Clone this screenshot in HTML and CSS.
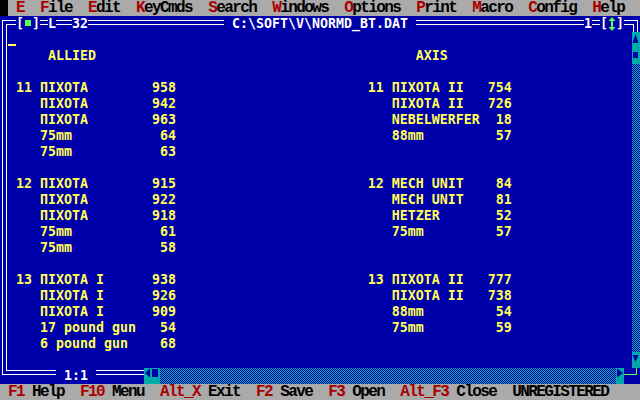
FILE: index.html
```html
<!DOCTYPE html>
<html lang="en">
<head>
<meta charset="utf-8">
<title>C:\SOFT\V\NORMD_BT.DAT</title>
<link rel="stylesheet" href="styles.css">
</head>
<body>
<div class="screen">
  <div class="row menubar">
    <span class="sel"></span>
    <span class="bartext"> <span class="hk macron">E</span>  <span class="hk">F</span>ile  <span class="hk">E</span>dit  <span class="hk">K</span>eyCmds  <span class="hk">S</span>earch  <span class="hk">W</span>indows  <span class="hk">O</span>ptions  <span class="hk">P</span>rint  <span class="hk">M</span>acro  <span class="hk">C</span>onfig  <span class="hk">H</span>elp</span>
  </div>

  <div class="window">
    <div class="row titlebar">
      <i class="corner-tl"></i><i class="dbl"></i><span class="t">[</span><span class="cell"><i class="close-box"></i></span><span class="t">]</span><i class="dbl"></i><span class="t">L</span><i class="dbl"></i><i class="dbl"></i><span class="t">32</span><i class="dbl fill-l"></i><span class="t"> C:\SOFT\V\NORMD_BT.DAT </span><i class="dbl fill-r"></i><span class="t">1</span><i class="dbl"></i><span class="t">[</span><span class="cell"><svg class="zoom-icon" viewBox="0 0 8 16" width="8" height="16"><path d="M4 1 L7.5 5 L5 5 L5 11 L7.5 11 L4 15 L0.5 11 L3 11 L3 5 L0.5 5 Z"/></svg></span><span class="t">]</span><i class="dbl"></i><i class="corner-tr"></i>
    </div>

    <div class="client">
      <div class="frame-left"></div>
<pre class="text"><span class="cursor"></span>
     ALLIED                                        AXIS

 11 ПІХОТА        958                        11 ПІХОТА II   754
    ПІХОТА        942                           ПІХОТА II   726
    ПІХОТА        963                           NEBELWERFER  18
    75mm           64                           88mm         57
    75mm           63

 12 ПІХОТА        915                        12 MECH UNIT    84
    ПІХОТА        922                           MECH UNIT    81
    ПІХОТА        918                           HETZER       52
    75mm           61                           75mm         57
    75mm           58

 13 ПІХОТА I      938                        13 ПІХОТА II   777
    ПІХОТА I      926                           ПІХОТА II   738
    ПІХОТА I      909                           88mm         54
    17 pound gun   54                           75mm         59
    6 pound gun    68
</pre>
      <div class="vscroll">
        <div class="sb-btn"><svg viewBox="0 0 8 16" width="8" height="16"><polygon points="3.5,2 6.5,11 0.5,11"/></svg></div>
        <div class="sb-btn"><svg viewBox="0 0 8 16" width="8" height="16"><rect x="1" y="4" width="5" height="6"/></svg></div>
        <div class="track"></div>
        <div class="sb-btn"><svg viewBox="0 0 8 16" width="8" height="16"><polygon points="0.5,3 6.5,3 3.5,10"/></svg></div>
      </div>
    </div>

    <div class="row bottombar">
      <i class="corner-bl"></i><i class="dbl-b six"></i><span class="t"> 1:1 </span><i class="dbl-b six"></i>
      <div class="sb-btn"><svg viewBox="0 0 8 16" width="8" height="16"><polygon points="1,5 6,0.5 6,9.5"/></svg></div>
      <div class="sb-btn"><svg viewBox="0 0 8 16" width="8" height="16"><rect x="0" y="1" width="6" height="8"/></svg></div>
      <div class="track"></div>
      <div class="sb-btn"><svg viewBox="0 0 8 16" width="8" height="16"><polygon points="1,0.5 7,5 1,9.5"/></svg></div>
      <i class="resize-grip"></i>
    </div>
  </div>

  <div class="row statusbar">
    <span class="bartext"> <span class="hk">F1</span> Help  <span class="hk">F10</span> Menu  <span class="hk">Alt_X</span> Exit  <span class="hk">F2</span> Save  <span class="hk">F3</span> Open  <span class="hk">Alt_F3</span> Close  UNREGISTERED</span>
  </div>
</div>
</body>
</html>
```

FILE: styles.css
```css
* {
  box-sizing: border-box;
  margin: 0;
  padding: 0;
}

html,
body {
  width: 640px;
  height: 400px;
  overflow: hidden;
  background: #000;
}

/* 80 x 25 text screen, 8 x 16 character cells */
.screen {
  width: 640px;
  height: 400px;
  display: flex;
  flex-direction: column;
  font-family: "DejaVu Sans Mono", monospace;
  font-size: 13.29px;
  font-weight: bold;
  line-height: 16px;
}

.row {
  height: 16px;
  display: flex;
  flex: none;
  white-space: pre;
}

i {
  display: block;
  flex: none;
}

/* ---------- menu and status bars ---------- */
.menubar,
.statusbar {
  background: #aaaaaa;
  color: #000;
  font-family: "Liberation Mono", monospace;
  font-size: 16px;
  letter-spacing: -1.6px;
  line-height: 15px;
  padding-top: 1px;
}

.bartext {
  display: block;
}

.hk {
  color: #aa0000;
}

/* system menu letter: E with a bar above */
.macron {
  display: inline-block;
  width: 8px;
  height: 15px;
  vertical-align: top;
  background: linear-gradient(#aa0000, #aa0000) 1px 0 / 6px 1px no-repeat;
}

.sel {
  width: 8px;
  height: 16px;
  margin-top: -1px;
  background: #000;
}

/* ---------- editor window ---------- */
.window {
  height: 368px;
  display: flex;
  flex-direction: column;
  background: #0000aa;
  color: #ffffff;
}

.t {
  color: #ffffff;
}

.cell {
  width: 8px;
  height: 16px;
  flex: none;
  display: block;
}

.close-box {
  width: 6px;
  height: 6px;
  margin: 4px 0 0 1px;
  background: #55ff55;
}

.zoom-icon {
  display: block;
  fill: #55ff55;
}

/* double frame line on the title row */
.dbl {
  width: 8px;
  height: 16px;
  background:
    linear-gradient(#fff, #fff) 0 4px / 100% 1px no-repeat,
    linear-gradient(#fff, #fff) 0 8px / 100% 1px no-repeat;
}

.fill-l {
  flex: 17 1 0;
}

.fill-r {
  flex: 21 1 0;
}

.corner-tl {
  width: 8px;
  height: 16px;
  background:
    linear-gradient(#fff, #fff) 2px 4px / 6px 1px no-repeat,
    linear-gradient(#fff, #fff) 2px 4px / 1px 12px no-repeat,
    linear-gradient(#fff, #fff) 6px 8px / 2px 1px no-repeat,
    linear-gradient(#fff, #fff) 6px 8px / 1px 8px no-repeat;
}

.corner-tr {
  width: 8px;
  height: 16px;
  background:
    linear-gradient(#fff, #fff) 0 4px / 6px 1px no-repeat,
    linear-gradient(#fff, #fff) 5px 4px / 1px 12px no-repeat,
    linear-gradient(#fff, #fff) 0 8px / 2px 1px no-repeat,
    linear-gradient(#fff, #fff) 1px 8px / 1px 8px no-repeat;
}

/* client area: left frame, text, vertical scroll bar */
.client {
  height: 336px;
  display: flex;
}

.frame-left {
  width: 8px;
  flex: none;
  background:
    linear-gradient(#fff, #fff) 2px 0 / 1px 100% no-repeat,
    linear-gradient(#fff, #fff) 6px 0 / 1px 100% no-repeat;
}

.text {
  flex: 1;
  font: inherit;
  line-height: 16px;
  color: #ffff55;
  white-space: pre;
  overflow: hidden;
}

.cursor {
  display: inline-block;
  width: 8px;
  height: 16px;
  vertical-align: top;
  background: linear-gradient(#ffff55, #ffff55) 0 12px / 100% 2px no-repeat;
}

.vscroll {
  width: 8px;
  flex: none;
  display: flex;
  flex-direction: column;
}

.sb-btn {
  width: 8px;
  height: 16px;
  flex: none;
  background: #00aaaa;
}

.sb-btn svg {
  display: block;
  fill: #0000aa;
}

.track {
  flex: 1;
  background-color: #0000aa;
  background-image: conic-gradient(#00aaaa 25%, transparent 0 50%, #00aaaa 0 75%, transparent 0);
  background-size: 2px 2px;
}

/* bottom frame row with the horizontal scroll bar */
.bottombar {
  align-items: stretch;
}

.corner-bl {
  width: 8px;
  height: 16px;
  background:
    linear-gradient(#fff, #fff) 2px 0 / 1px 7px no-repeat,
    linear-gradient(#fff, #fff) 2px 6px / 6px 1px no-repeat,
    linear-gradient(#fff, #fff) 6px 0 / 1px 3px no-repeat,
    linear-gradient(#fff, #fff) 6px 2px / 2px 1px no-repeat;
}

.dbl-b {
  height: 16px;
  background:
    linear-gradient(#fff, #fff) 0 2px / 100% 1px no-repeat,
    linear-gradient(#fff, #fff) 0 6px / 100% 1px no-repeat;
}

.six {
  width: 48px;
}

.resize-grip {
  width: 16px;
  height: 16px;
  background:
    linear-gradient(#55ff55, #55ff55) 0 6px / 13px 1px no-repeat,
    linear-gradient(#55ff55, #55ff55) 12px 0 / 1px 7px no-repeat;
}
```
